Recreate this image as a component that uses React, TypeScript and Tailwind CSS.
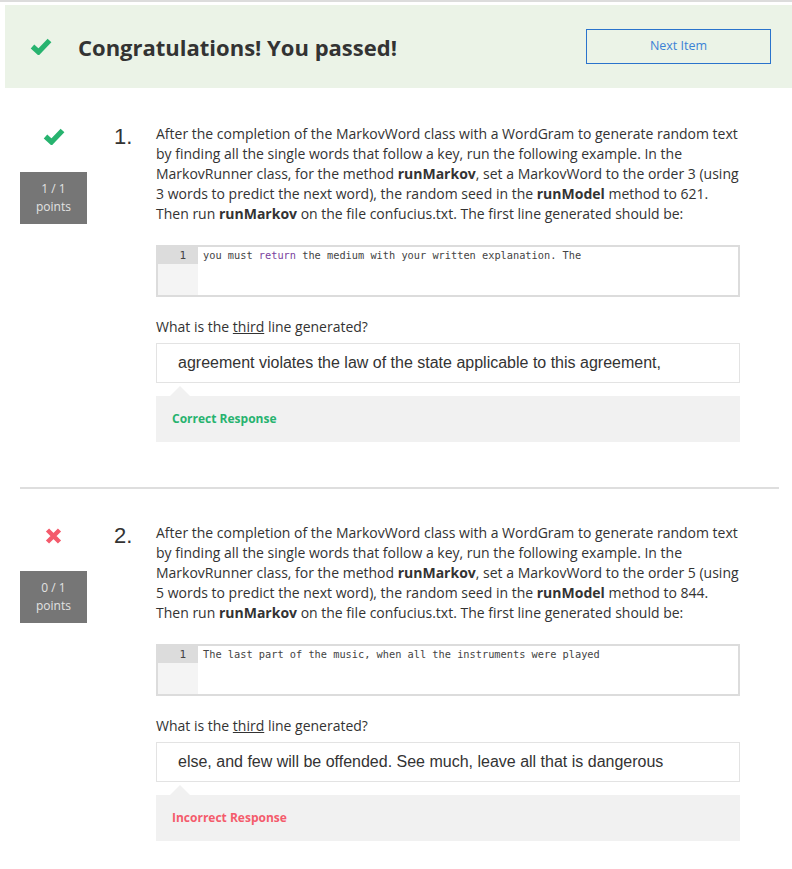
import React from "react";

function CheckIcon() {
  return (
    <svg width="22" height="17" viewBox="0 0 22 17">
      <polyline points="2.5,8.5 8.5,14 19.5,2.5" fill="none" stroke="#27b36f" strokeWidth="5.2" strokeLinejoin="miter" />
    </svg>
  );
}

function CrossIcon() {
  return (
    <svg width="17" height="16" viewBox="0 0 17 16">
      <path d="M2.5 2 L14.5 14 M14.5 2 L2.5 14" stroke="#f45b6c" strokeWidth="4.5" />
    </svg>
  );
}

type Question = {
  num: string;
  correct: boolean;
  order: string;
  seed: string;
  firstLine: React.ReactNode;
  answer: string;
};

const questions: Question[] = [
  {
    num: "1.",
    correct: true,
    order: "3",
    seed: "621",
    firstLine: (
      <>
        you must <span className="text-[#7b3f9e]">return</span> the medium with your written explanation. The
      </>
    ),
    answer: "agreement violates the law of the state applicable to this agreement,",
  },
  {
    num: "2.",
    correct: false,
    order: "5",
    seed: "844",
    firstLine: <>The last part of the music, when all the instruments were played</>,
    answer: "else, and few will be offended. See much, leave all that is dangerous",
  },
];

function QuestionBlock({ q }: { q: Question }) {
  return (
    <div className="flex pl-[20px]">
      {/* left: status + points */}
      <div className="w-[67px] flex flex-col items-center">
        <div className="mt-[4px] h-[17px] flex items-center">{q.correct ? <CheckIcon /> : <CrossIcon />}</div>
        <div className="mt-[27px] w-[67px] h-[52px] bg-[#767676] text-[#e2e2e2] text-[12px] leading-[18px] flex flex-col items-center justify-center">
          <span>{q.correct ? "1 / 1" : "0 / 1"}</span>
          <span>points</span>
        </div>
      </div>

      <div className="ml-[27px] w-[42px] font-['Liberation_Sans'] text-[22px] leading-[24px] text-[#333] mt-[1px]">{q.num}</div>

      <div className="w-[584px]">
        <div className="text-[14px] leading-[20px] text-[#333] whitespace-nowrap">
          <div>After the completion of the MarkovWord class with a WordGram to generate random text</div>
          <div>by finding all the single words that follow a key, run the following example. In the</div>
          <div>
            MarkovRunner class, for the method <b>runMarkov</b>, set a MarkovWord to the order {q.order} (using
          </div>
          <div>
            {q.order} words to predict the next word), the random seed in the <b>runModel</b> method to {q.seed}.
          </div>
          <div>
            Then run <b>runMarkov</b> on the file confucius.txt. The first line generated should be:
          </div>
        </div>

        <div className="mt-[21px] h-[52px] border-2 border-[#dcdcdc] flex">
          <div className="w-[40px] bg-[#f4f4f4]">
            <div className="h-[17px] bg-[#dcdcdc] text-right pr-[12px] font-['DejaVu_Sans_Mono'] text-[11px] leading-[17px] text-[#444]">1</div>
          </div>
          <div className="pl-[5px] font-['DejaVu_Sans_Mono'] text-[10.3px] leading-[17px] text-[#444] whitespace-nowrap">{q.firstLine}</div>
        </div>

        <div className="mt-[20px] text-[14px] leading-[20px] text-[#333]">
          What is the <span className="underline">third</span> line generated?
        </div>

        <div className="mt-[6px] h-[40px] border border-[#e3e3e3] flex items-center pl-[21px] font-['Liberation_Sans'] text-[16px] text-[#333] whitespace-nowrap">
          {q.answer}
        </div>

        <div className="relative mt-[13px] h-[46px] bg-[#f1f1f1] flex items-center pl-[16px]">
          <div className="absolute left-[14px] -top-[10px] w-0 h-0 border-l-[10px] border-r-[10px] border-b-[10px] border-l-transparent border-r-transparent border-b-[#f1f1f1]" />
          <span className={"text-[12px] font-bold " + (q.correct ? "text-[#27b36f]" : "text-[#f45b6c]")}>
            {q.correct ? "Correct Response" : "Incorrect Response"}
          </span>
        </div>
      </div>
    </div>
  );
}

export default function App() {
  return (
    <div className="min-h-screen bg-white font-['Open_Sans',sans-serif] border-t-2 border-[#dcdcdc]">
      <div className="pt-[3px] pl-[5px]">
        <div className="h-[83px] bg-[#ebf3e7] flex items-center pl-[25px] pr-[21px]">
          <CheckIcon />
          <h1 className="ml-[26px] mt-[2px] text-[22px] font-bold text-[#333]">Congratulations! You passed!</h1>
          <button className="ml-auto w-[185px] h-[35px] border border-[#2a73cc] text-[#3c82d6] text-[12.5px]">Next Item</button>
        </div>
      </div>

      <div className="mt-[36px]">
        <QuestionBlock q={questions[0]} />
      </div>

      <div className="mt-[45px] ml-[20px] w-[759px] h-[2px] bg-[#dedede]" />

      <div className="mt-[34px] pb-[28px]">
        <QuestionBlock q={questions[1]} />
      </div>
    </div>
  );
}
